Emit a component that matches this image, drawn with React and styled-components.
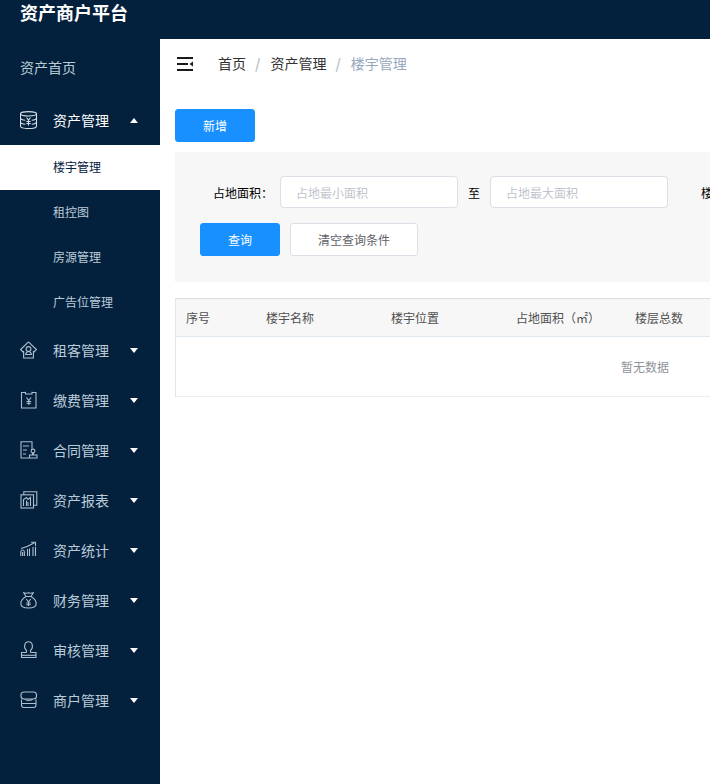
import React from "react"
import styled, { createGlobalStyle } from "styled-components"

const navy = "#03213d"
const iconColor = "#bccbd8"

const GlobalStyle = createGlobalStyle`
  html, body {
    margin: 0;
    padding: 0;
    overflow: hidden;
    background: #fff;
    font-family: "Noto Sans CJK SC", "Liberation Sans", sans-serif;
  }
  * { box-sizing: border-box; }
`

const Svg = ({ children }) => (
  <svg viewBox="0 0 18 18" width="18" height="18" fill="none" stroke="currentColor" strokeWidth="1.1">
    {children}
  </svg>
)

const IconDatabase = () => (
  <Svg>
    <ellipse cx="8.500" cy="2.800" rx="8" ry="2.200" />
    <path d="M.5 2.800v12.400c0 1.300 3.600 2.300 8 2.300s8-1 8-2.300V2.800" />
    <path d="M.5 7c0 1.200 2.200 2 4.800 2.200M16.500 7c0 1.200-2.200 2-4.800 2.200M.5 11c0 1.200 2.200 2 4.800 2.200M16.500 11c0 1.200-2.200 2-4.800 2.200" />
    <path d="M6.500 6.500l2 2.500 2-2.500M8.500 9v5.500M6.300 10.500h4.400M6.300 12.500h4.400" />
  </Svg>
)

const IconTenant = () => (
  <Svg>
    <path d="M8.500.8L.6 8.500l3 3M8.500.8l7.900 7.700-3 3M3.600 10v7h9.800v-7" />
    <circle cx="8.500" cy="8" r="2.400" />
    <path d="M5.500 13.500c.4-1.800 1.600-3 3-3s2.600 1.200 3 3z" />
  </Svg>
)

const IconBill = () => (
  <Svg>
    <path d="M5.500 1.500H1.500v15.500h14.500V1.500H12" />
    <path d="M5.500.8v2.200h6.500V.8" />
    <path d="M6.500 6.500l2.300 3 2.300-3M8.800 9.500V14M6.500 10.500h4.600M6.500 12.300h4.600" />
  </Svg>
)

const IconContract = () => (
  <Svg>
    <path d="M9 17H1V.8h11v7" />
    <path d="M3 5h6M3 9h4M3 13h3" />
    <circle cx="13" cy="10" r="1.900" />
    <path d="M12.500 12v2M13.500 12v2M9.500 17v-3h7.500v3z" />
  </Svg>
)

const IconReport = () => (
  <Svg>
    <path d="M3.800 3.800V.8h13v13.500h-3.500" />
    <rect x="1" y="3.800" width="12.500" height="13.200" />
    <path d="M3.500 15V8.500l3-2 1.500 2 2.500-2V15M6.500 15V9.500M8 15v-4" />
  </Svg>
)

const IconStats = () => (
  <Svg>
    <path d="M.8 15v-4c0-1 .6-2 1.800-2s1.800 1 1.800 2v4M2.600 15v-4" />
    <path d="M7.500 15V8M9.500 15V7.500M13 15V6M15.500 15V6" />
    <path d="M1 7.500C5 6.500 10 4.500 14.500 1.800" />
    <path d="M11 1.300h4.500v4" />
  </Svg>
)

const IconBag = () => (
  <Svg>
    <path d="M6 5.500L3.800 1.800c1.700.6 3 .6 4.700 0 1.700.6 3 .6 4.700 0L11 5.500z" />
    <path d="M6 5.500C3 7.300.8 10 .8 12.500.8 15.700 3.500 17 8.500 17s7.700-1.300 7.700-4.500c0-2.500-2.200-5.200-5.200-7" />
    <path d="M6.300 8l2.200 3 2.200-3M8.500 11v4M6.300 12h4.400M6.300 13.700h4.400" />
  </Svg>
)

const IconStamp = () => (
  <Svg>
    <path d="M6.500 11.500V9.500C3.600 7.500 3.800.8 8.500.8s4.900 6.700 2 8.700v2" />
    <path d="M6.500 11.500H1.500V16.500H16V11.500H10.500" />
    <path d="M1.500 14.300H16" />
  </Svg>
)

const IconStore = () => (
  <Svg>
    <rect x="1" y="1" width="15.500" height="7" rx="3" />
    <path d="M5 8c.3 1.800 6.700 1.800 7.500 0" />
    <path d="M1.500 8.500V14a2.500 2.500 0 002.500 2.500h9.500A2.500 2.500 0 0016 14V8.500M1.500 12.500H16" />
  </Svg>
)

const IconCollapse = () => (
  <svg viewBox="0 0 16 14" width="16" height="14" fill="#1a1a1a">
    <rect x="0" y="0" width="16" height="2" />
    <rect x="0" y="6" width="11" height="2" />
    <rect x="0" y="12" width="16" height="2" />
    <path d="M16 4.500v5L12.500 7z" />
  </svg>
)

const menus = [
  {
    title: "资产管理",
    icon: IconDatabase,
    open: true,
    children: ["楼宇管理", "租控图", "房源管理", "广告位管理"],
  },
  { title: "租客管理", icon: IconTenant },
  { title: "缴费管理", icon: IconBill },
  { title: "合同管理", icon: IconContract },
  { title: "资产报表", icon: IconReport },
  { title: "资产统计", icon: IconStats },
  { title: "财务管理", icon: IconBag },
  { title: "审核管理", icon: IconStamp },
  { title: "商户管理", icon: IconStore },
]

const columns = [
  { label: "序号", width: 80 },
  { label: "楼宇名称", width: 125 },
  { label: "楼宇位置", width: 125 },
  { label: "占地面积（㎡）", width: 119 },
  { label: "楼层总数", width: 120 },
  { label: "建筑面积", width: 120 },
  { label: "操作", width: 249 },
]

const App = () => {
  return (
    <Page>
      <GlobalStyle />
      <TopBar>
        <Brand>资产商户平台</Brand>
      </TopBar>
      <Body>
        <Sidebar>
          <HomeLink>资产首页</HomeLink>
          {menus.map((menu) => {
            const Icon = menu.icon
            return (
              <React.Fragment key={menu.title}>
                <MenuRow $open={menu.open}>
                  <MenuIcon $open={menu.open}>
                    <Icon />
                  </MenuIcon>
                  <MenuTitle>{menu.title}</MenuTitle>
                  <Caret $open={menu.open} />
                </MenuRow>
                {menu.children &&
                  menu.children.map((child, index) => (
                    <SubItem key={child} $active={index === 0}>
                      {child}
                    </SubItem>
                  ))}
              </React.Fragment>
            )
          })}
        </Sidebar>
        <Main>
          <Crumbs>
            <Collapse>
              <IconCollapse />
            </Collapse>
            <Crumb>首页</Crumb>
            <Slash>/</Slash>
            <Crumb>资产管理</Crumb>
            <Slash>/</Slash>
            <Crumb $last>楼宇管理</Crumb>
          </Crumbs>
          <Content>
            <Button $primary>新增</Button>
            <Filter>
              <FilterRow>
                <FieldLabel>占地面积：</FieldLabel>
                <TextInput placeholder="占地最小面积" />
                <To>至</To>
                <TextInput placeholder="占地最大面积" />
                <FieldLabel $next>楼层总数：</FieldLabel>
                <TextInput placeholder="楼层总数" />
              </FilterRow>
              <FilterActions>
                <Button $primary>查询</Button>
                <Button $wide>清空查询条件</Button>
              </FilterActions>
            </Filter>
            <Table>
              <thead>
                <tr>
                  {columns.map((col) => (
                    <th key={col.label} style={{ width: col.width }}>
                      {col.label}
                    </th>
                  ))}
                </tr>
              </thead>
              <tbody>
                <tr>
                  <td colSpan={columns.length}>暂无数据</td>
                </tr>
              </tbody>
            </Table>
          </Content>
        </Main>
      </Body>
    </Page>
  )
}

const Page = styled.div`
  width: 710px;
  height: 784px;
  overflow: hidden;
  display: flex;
  flex-direction: column;
`

const TopBar = styled.header`
  flex: 0 0 39px;
  background-color: ${navy};
  display: flex;
  align-items: flex-start;
  padding-left: 20px;
`

const Brand = styled.h1`
  margin: 0;
  font-size: 18px;
  line-height: 25px;
  font-weight: 700;
  color: #fff;
`

const Body = styled.div`
  flex: 1;
  display: flex;
  min-height: 0;
`

const Sidebar = styled.nav`
  flex: 0 0 160px;
  background-color: ${navy};
  padding-top: 4px;
`

const HomeLink = styled.div`
  height: 50px;
  margin-bottom: 2px;
  padding-left: 20px;
  font-size: 14px;
  line-height: 48px;
  color: ${iconColor};
`

const MenuRow = styled.div`
  height: 50px;
  display: flex;
  align-items: center;
  padding-left: 20px;
  color: ${(props) => (props.$open ? "#fff" : iconColor)};
`

const MenuIcon = styled.span`
  flex: 0 0 33px;
  display: flex;
  color: ${(props) => (props.$open ? "#d8e0e7" : "#aebdcb")};
`

const MenuTitle = styled.span`
  flex: 0 0 76.500px;
  font-size: 14px;
`

const Caret = styled.i`
  width: 0;
  height: 0;
  border-left: 4.5px solid transparent;
  border-right: 4.5px solid transparent;
  ${(props) =>
    props.$open
      ? "border-bottom: 5px solid #fff;"
      : "border-top: 5px solid #fff;"}
`

const SubItem = styled.div`
  height: 45px;
  padding-left: 53px;
  font-size: 12px;
  line-height: 44px;
  color: ${(props) => (props.$active ? navy : iconColor)};
  background-color: ${(props) => (props.$active ? "#fff" : "transparent")};
`

const Main = styled.main`
  flex: 1;
  min-width: 0;
`

const Crumbs = styled.div`
  height: 50px;
  display: flex;
  align-items: center;
  padding-left: 17px;
  font-size: 14px;
`

const Collapse = styled.span`
  display: flex;
  margin-right: 25px;
`

const Crumb = styled.span`
  padding-bottom: 2px;
  color: ${(props) => (props.$last ? "#97a8be" : "#303133")};
`

const Slash = styled.span`
  margin: 0 10px 0 9px;
  padding-bottom: 2px;
  color: #c0c4cc;
  font-weight: 700;
`

const Content = styled.div`
  width: 938px;
  margin-left: 15px;
  padding-top: 20px;
`

const Button = styled.button`
  display: block;
  width: ${(props) => (props.$wide ? "128px" : "80px")};
  height: 33px;
  padding: 0;
  font-family: inherit;
  font-size: 12px;
  border-radius: 3px;
  border: 1px solid ${(props) => (props.$primary ? "#1890ff" : "#dcdfe6")};
  background-color: ${(props) => (props.$primary ? "#1890ff" : "#fff")};
  color: ${(props) => (props.$primary ? "#fff" : "#606266")};
`

const Filter = styled.section`
  margin-top: 10px;
  height: 130px;
  padding: 24px 25px 0;
  background-color: #f7f7f7;
`

const FilterRow = styled.div`
  display: flex;
  align-items: center;
  white-space: nowrap;
`

const FieldLabel = styled.label`
  flex: 0 0 auto;
  width: 80px;
  padding-right: 7px;
  text-align: right;
  font-size: 12px;
  color: #000;
  margin-left: ${(props) => (props.$next ? "20px" : "0")};
`

const TextInput = styled.input`
  flex: 0 0 178px;
  width: 178px;
  height: 32px;
  padding: 0 15px;
  font-family: inherit;
  font-size: 12px;
  color: #606266;
  background-color: #fff;
  border: 1px solid #dcdfe6;
  border-radius: 4px;
  outline: none;

  &::placeholder {
    color: #c0c4cc;
  }
`

const To = styled.span`
  flex: 0 0 32px;
  text-align: center;
  font-size: 12px;
  color: #000;
`

const FilterActions = styled.div`
  display: flex;
  gap: 10px;
  margin-top: 15px;
`

const Table = styled.table`
  width: 938px;
  margin-top: 16px;
  table-layout: fixed;
  border-collapse: separate;
  border-spacing: 0;
  border-left: 1px solid #dfe6ec;
  border-top: 1px solid #dcdcdc;
  font-size: 12px;

  th {
    height: 38px;
    padding: 0 10px;
    text-align: left;
    font-weight: 400;
    color: #505050;
    background-color: #f7f7f7;
    border-bottom: 1px solid #dfe6ec;
  }

  td {
    height: 60px;
    text-align: center;
    color: #909399;
    border-bottom: 1px solid #ebeef5;
  }
`

export default App
